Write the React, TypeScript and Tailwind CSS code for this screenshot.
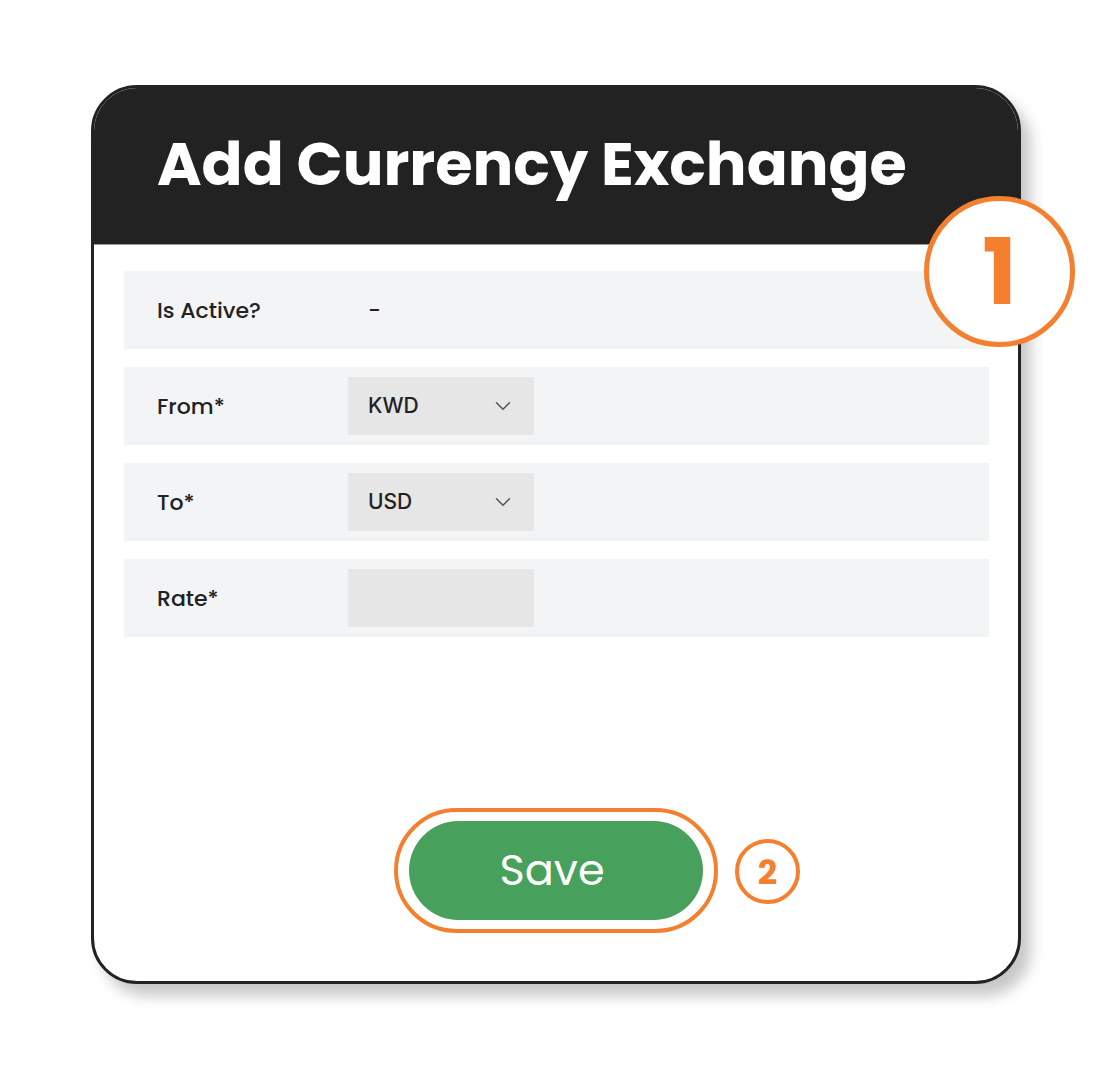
import { ChevronDown } from 'lucide-react';

const font = { fontFamily: 'Poppins, Inter, "Noto Sans", sans-serif' };
const inter = { fontFamily: 'Inter, "Noto Sans", sans-serif' };

function SelectBox({ value }: { value: string }) {
    return (
        <div className="w-[186px] h-[58px] bg-[#e5e6e5] flex items-center justify-between pl-5 pr-[18px]">
            <span className="text-[21px] font-medium text-[#222]" style={inter}>{value}</span>
            <ChevronDown size={26} strokeWidth={1.4} className="text-[#555]" />
        </div>
    );
}

function Row({ label, children }: { label: string; children?: React.ReactNode }) {
    return (
        <div className="h-[78px] bg-[#f3f4f6] flex items-center pl-[33px]">
            <span className="w-[191px] text-[22px] font-medium text-[#222]">{label}</span>
            {children}
        </div>
    );
}

export default function App() {
    return (
        <div className="min-h-screen bg-white pt-[85px] pl-[91px]" style={font}>
            <div className="relative w-[930px] h-[899px] rounded-[46px] border-[3px] border-[#222] bg-white flex flex-col overflow-visible shadow-[10px_12px_14px_rgba(0,0,0,0.22)]">
                <div className="h-[157px] bg-[#222] rounded-t-[43px] border-b border-[#999] flex items-start pl-[63px] pt-[46px]">
                    <h1 className="text-[60.5px] font-bold text-white leading-none">Add Currency Exchange</h1>
                </div>

                <div className="flex flex-col gap-[18px] pt-[26px] pl-[30px] pr-[29px]">
                    <Row label="Is Active?">
                        <span className="pl-5 text-[22px] font-medium text-[#222]">-</span>
                    </Row>
                    <Row label="From*">
                        <SelectBox value="KWD" />
                    </Row>
                    <Row label="To*">
                        <SelectBox value="USD" />
                    </Row>
                    <Row label="Rate*">
                        <div className="w-[186px] h-[58px] bg-[#e5e6e5]" />
                    </Row>
                </div>

                <div className="flex-1" />

                <div className="flex justify-center pb-[48px]">
                    <div className="relative rounded-full border-4 border-[#f37f2f] px-[11px] py-[9px]">
                        <button className="w-[294px] h-[99px] rounded-full bg-[#47a05c] text-white text-[43px] font-normal pr-[8px]">
                            Save
                        </button>
                        <div className="absolute left-[337px] top-[27px] w-[65px] h-[65px] rounded-full border-4 border-[#f37f2f] bg-white flex items-center justify-center">
                            <span className="text-[34px] font-bold text-[#f37f2f] leading-none">2</span>
                        </div>
                    </div>
                </div>

                <div className="absolute left-[830px] top-[108px] w-[151px] h-[151px] rounded-full border-[5px] border-[#f37f2f] bg-white flex items-center justify-center">
                    <span className="text-[92px] font-bold text-[#f37f2f] leading-none">1</span>
                </div>
            </div>
        </div>
    );
}
